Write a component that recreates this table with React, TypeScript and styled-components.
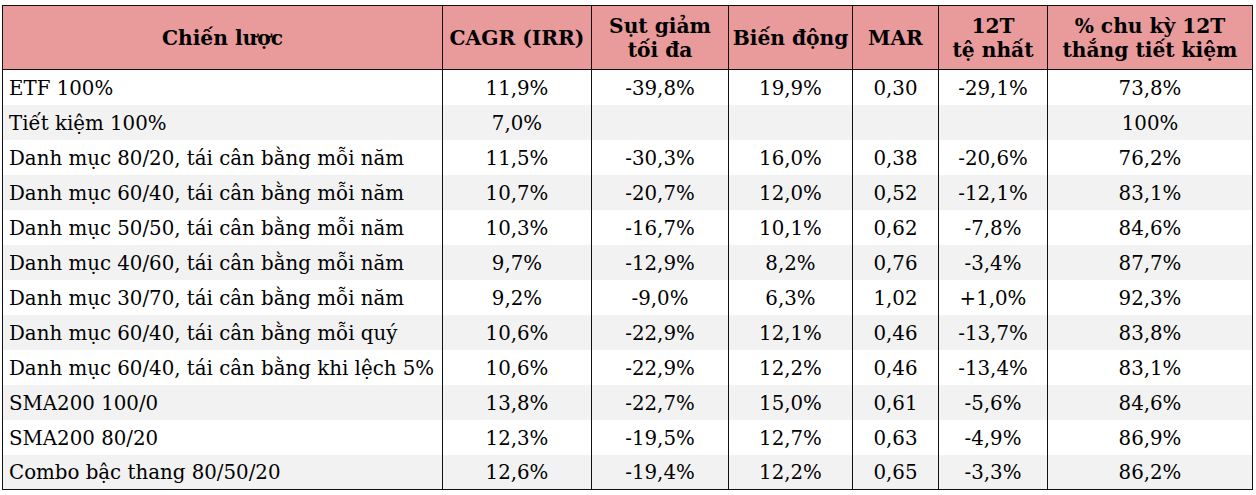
import React from 'react';
import styled, { createGlobalStyle } from 'styled-components';

const GlobalStyle = createGlobalStyle`
    body {
        margin: 0;
        background: #ffffff;
        font-family: "DejaVu Serif", "Liberation Serif", serif;
        color: #000;
    }
`;

const Page = styled.div`
    padding: 5px 0 0 2px;
`;

const Table = styled.table`
    width: 1250px;
    border-collapse: collapse;
    table-layout: fixed;
    border: 1px solid #111;
`;

const HeadCell = styled.th`
    background-color: #e99a9b;
    height: 62px;
    padding: 1px 0 0;
    border: 1px solid #111;
    font-size: 20.2px;
    font-weight: bold;
    line-height: 24px;
    text-align: center;
    vertical-align: middle;
`;

const Row = styled.tr<{ $shaded: boolean }>`
    height: 35px;
    background-color: ${(props) => (props.$shaded ? '#f2f2f2' : '#ffffff')};
`;

const Cell = styled.td<{ $left?: boolean }>`
    padding: 3px 0 0;
    padding-left: ${(props) => (props.$left ? '6px' : '0')};
    border-left: 1px solid #111;
    border-right: 1px solid #111;
    font-size: 19.8px;
    line-height: 24px;
    text-align: ${(props) => (props.$left ? 'left' : 'center')};
    vertical-align: middle;
    white-space: nowrap;
`;

const widths = [440, 149, 137, 124, 86, 109, 205];

const headers: React.ReactNode[] = [
    'Chiến lược',
    'CAGR (IRR)',
    <>Sụt giảm<br />tối đa</>,
    'Biến động',
    'MAR',
    <>12T<br />tệ nhất</>,
    <>% chu kỳ 12T<br />thắng tiết kiệm</>,
];

const rows: string[][] = [
    ['ETF 100%', '11,9%', '-39,8%', '19,9%', '0,30', '-29,1%', '73,8%'],
    ['Tiết kiệm 100%', '7,0%', '', '', '', '', '100%'],
    ['Danh mục 80/20, tái cân bằng mỗi năm', '11,5%', '-30,3%', '16,0%', '0,38', '-20,6%', '76,2%'],
    ['Danh mục 60/40, tái cân bằng mỗi năm', '10,7%', '-20,7%', '12,0%', '0,52', '-12,1%', '83,1%'],
    ['Danh mục 50/50, tái cân bằng mỗi năm', '10,3%', '-16,7%', '10,1%', '0,62', '-7,8%', '84,6%'],
    ['Danh mục 40/60, tái cân bằng mỗi năm', '9,7%', '-12,9%', '8,2%', '0,76', '-3,4%', '87,7%'],
    ['Danh mục 30/70, tái cân bằng mỗi năm', '9,2%', '-9,0%', '6,3%', '1,02', '+1,0%', '92,3%'],
    ['Danh mục 60/40, tái cân bằng mỗi quý', '10,6%', '-22,9%', '12,1%', '0,46', '-13,7%', '83,8%'],
    ['Danh mục 60/40, tái cân bằng khi lệch 5%', '10,6%', '-22,9%', '12,2%', '0,46', '-13,4%', '83,1%'],
    ['SMA200 100/0', '13,8%', '-22,7%', '15,0%', '0,61', '-5,6%', '84,6%'],
    ['SMA200 80/20', '12,3%', '-19,5%', '12,7%', '0,63', '-4,9%', '86,9%'],
    ['Combo bậc thang 80/50/20', '12,6%', '-19,4%', '12,2%', '0,65', '-3,3%', '86,2%'],
];

export const App = () => {
    return (
        <>
            <GlobalStyle />
            <Page>
                <Table>
                    <colgroup>
                        {widths.map((w, i) => (
                            <col key={i} style={{ width: w }} />
                        ))}
                    </colgroup>
                    <thead>
                        <tr>
                            {headers.map((h, i) => (
                                <HeadCell key={i}>{h}</HeadCell>
                            ))}
                        </tr>
                    </thead>
                    <tbody>
                        {rows.map((r, i) => (
                            <Row key={i} $shaded={i % 2 === 1}>
                                {r.map((v, j) => (
                                    <Cell key={j} $left={j === 0}>{v}</Cell>
                                ))}
                            </Row>
                        ))}
                    </tbody>
                </Table>
            </Page>
        </>
    );
};

export default App;
